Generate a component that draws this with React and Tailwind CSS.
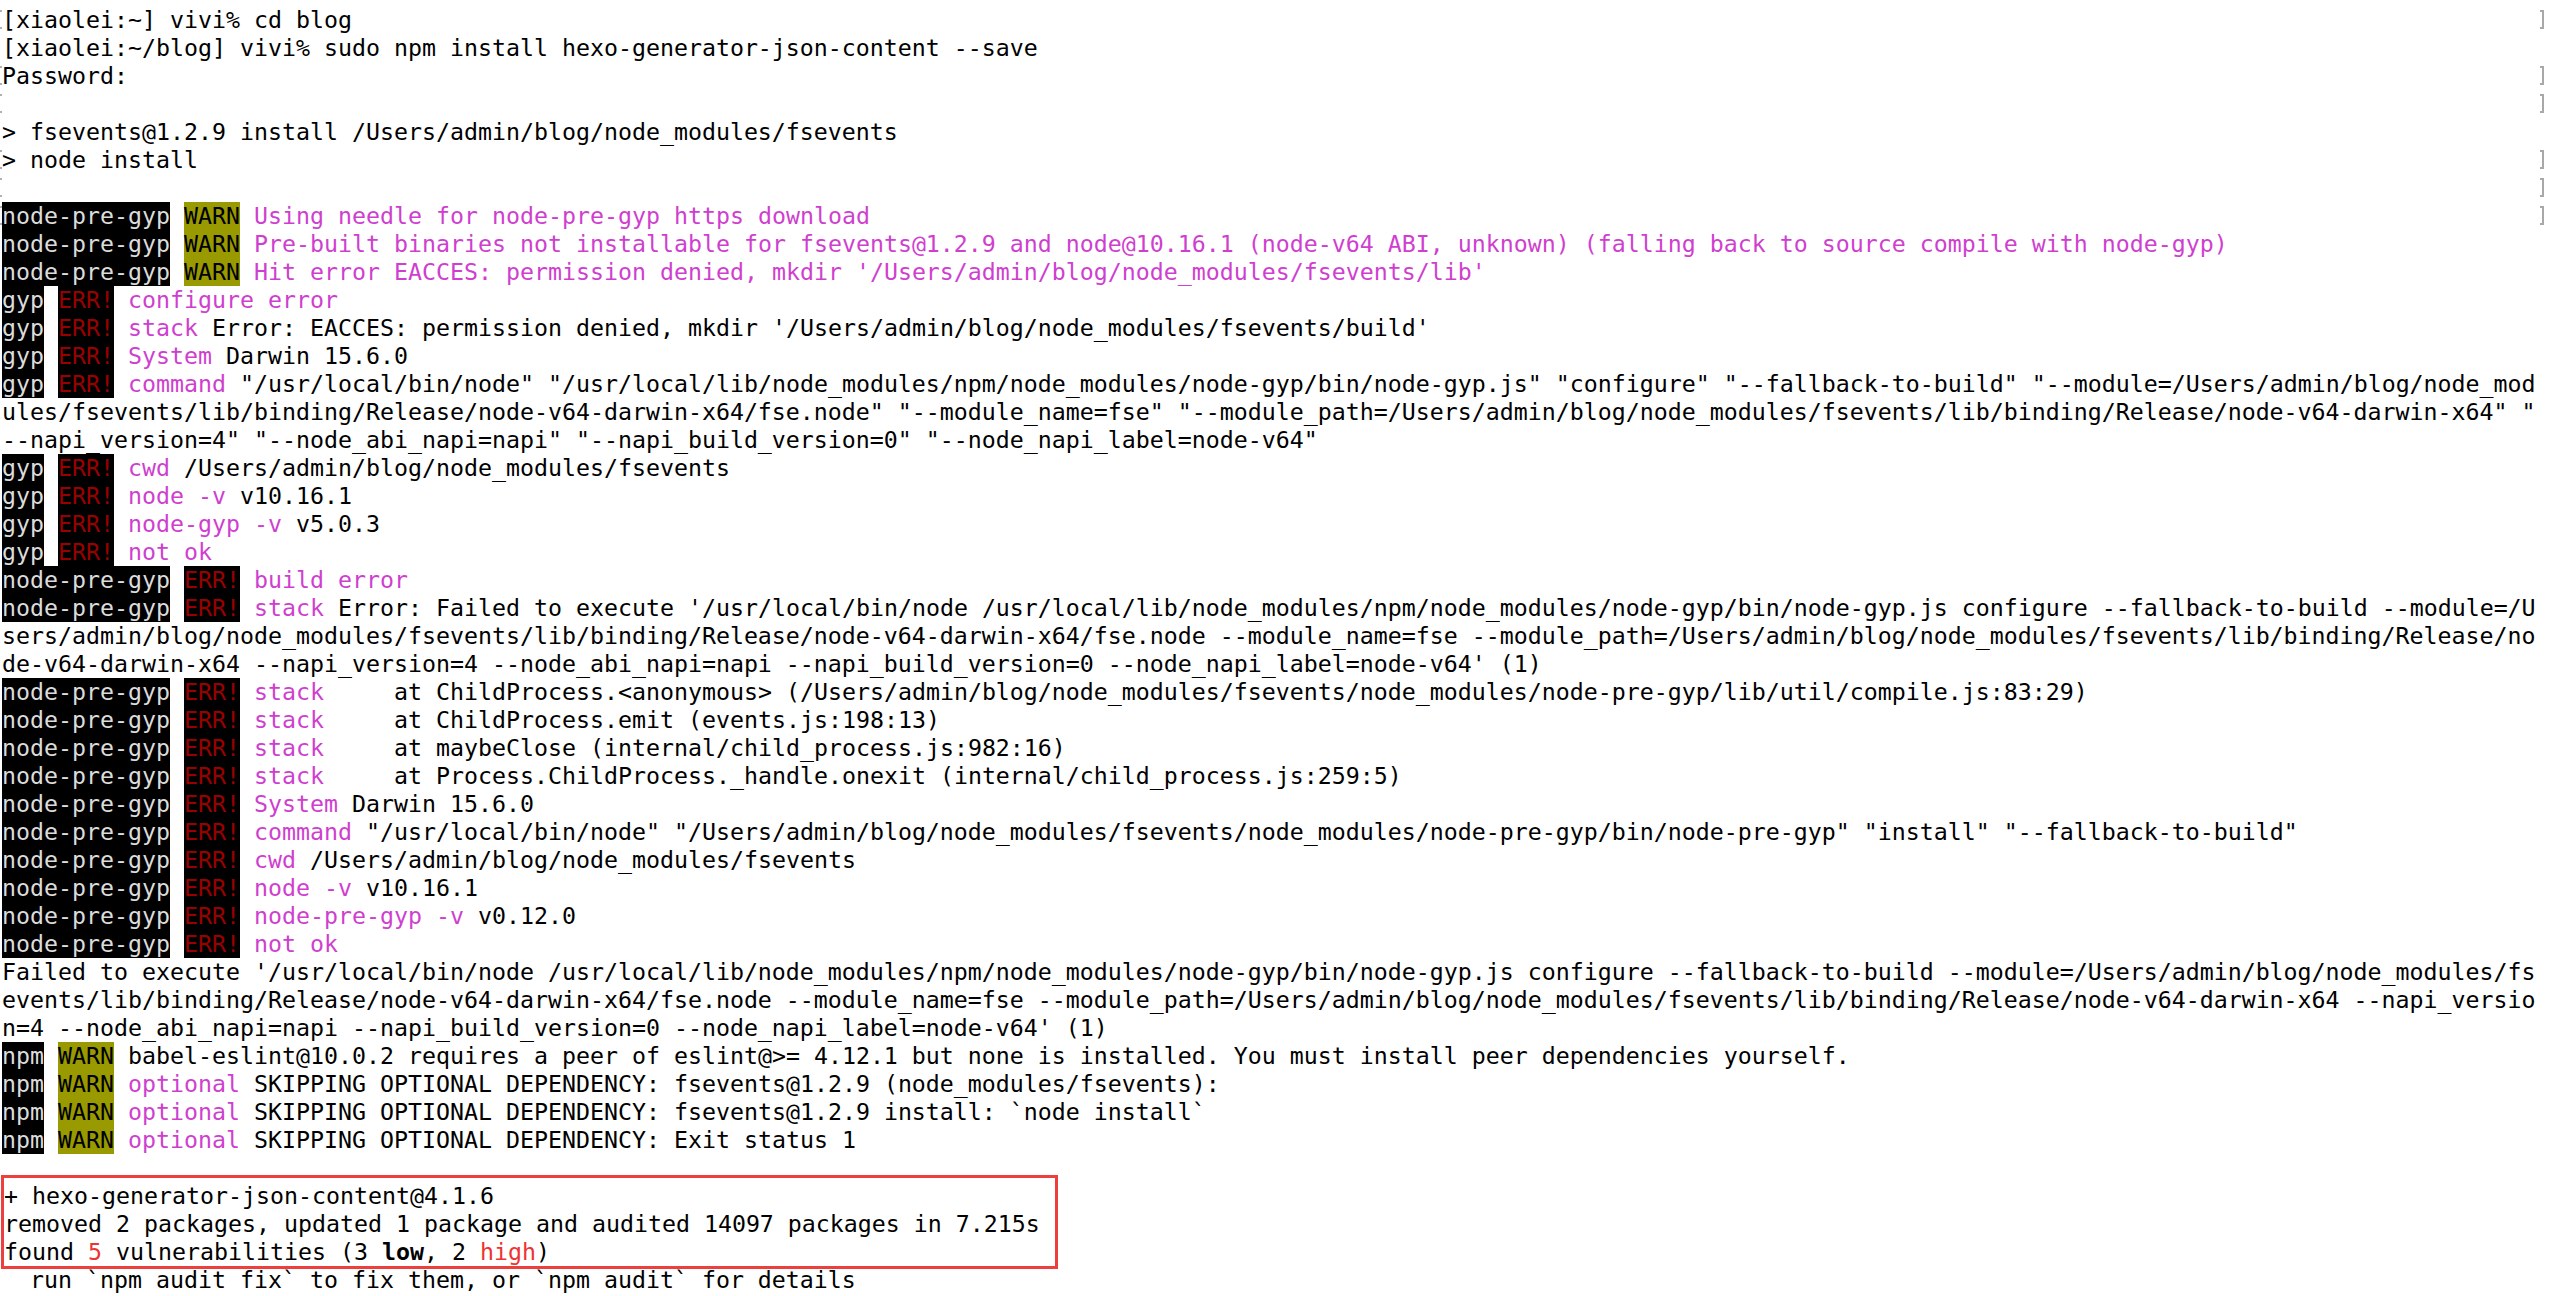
import React from 'react';

const tone = {
    inv: 'bg-black text-[#dcdcdc]',
    warn: 'bg-[#999900] text-black',
    err: 'bg-black text-[#990000]',
    mag: 'text-[#cf3fcf]',
    red: 'text-[#ee3333]',
    bold: 'font-bold',
};

// prefixes used by npm / node-gyp output
const npgW = [['node-pre-gyp', 'inv'], [' '], ['WARN', 'warn'], [' ']];
const npgE = [['node-pre-gyp', 'inv'], [' '], ['ERR!', 'err'], [' ']];
const gyp = [['gyp', 'inv'], [' '], ['ERR!', 'err'], [' ']];
const npm = [['npm', 'inv'], [' '], ['WARN', 'warn'], [' ']];

const lines = [
    {segs: [['[xiaolei:~] vivi% cd blog']], mark: true},
    {segs: [['[xiaolei:~/blog] vivi% sudo npm install hexo-generator-json-content --save']]},
    {segs: [['Password:']], mark: true},
    {segs: [['']], mark: true},
    {segs: [['> fsevents@1.2.9 install /Users/admin/blog/node_modules/fsevents']]},
    {segs: [['> node install']], mark: true},
    {segs: [['']], mark: true},
    {segs: [...npgW, ['Using needle for node-pre-gyp https download', 'mag']], mark: true},
    {segs: [...npgW, ['Pre-built binaries not installable for fsevents@1.2.9 and node@10.16.1 (node-v64 ABI, unknown) (falling back to source compile with node-gyp)', 'mag']]},
    {segs: [...npgW, ["Hit error EACCES: permission denied, mkdir '/Users/admin/blog/node_modules/fsevents/lib'", 'mag']]},
    {segs: [...gyp, ['configure error', 'mag']]},
    {segs: [...gyp, ['stack', 'mag'], [" Error: EACCES: permission denied, mkdir '/Users/admin/blog/node_modules/fsevents/build'"]]},
    {segs: [...gyp, ['System', 'mag'], [' Darwin 15.6.0']]},
    {segs: [...gyp, ['command', 'mag'], [' "/usr/local/bin/node" "/usr/local/lib/node_modules/npm/node_modules/node-gyp/bin/node-gyp.js" "configure" "--fallback-to-build" "--module=/Users/admin/blog/node_mod']]},
    {segs: [['ules/fsevents/lib/binding/Release/node-v64-darwin-x64/fse.node" "--module_name=fse" "--module_path=/Users/admin/blog/node_modules/fsevents/lib/binding/Release/node-v64-darwin-x64" "']]},
    {segs: [['--napi_version=4" "--node_abi_napi=napi" "--napi_build_version=0" "--node_napi_label=node-v64"']]},
    {segs: [...gyp, ['cwd', 'mag'], [' /Users/admin/blog/node_modules/fsevents']]},
    {segs: [...gyp, ['node -v', 'mag'], [' v10.16.1']]},
    {segs: [...gyp, ['node-gyp -v', 'mag'], [' v5.0.3']]},
    {segs: [...gyp, ['not ok', 'mag']]},
    {segs: [...npgE, ['build error', 'mag']]},
    {segs: [...npgE, ['stack', 'mag'], [" Error: Failed to execute '/usr/local/bin/node /usr/local/lib/node_modules/npm/node_modules/node-gyp/bin/node-gyp.js configure --fallback-to-build --module=/U"]]},
    {segs: [['sers/admin/blog/node_modules/fsevents/lib/binding/Release/node-v64-darwin-x64/fse.node --module_name=fse --module_path=/Users/admin/blog/node_modules/fsevents/lib/binding/Release/no']]},
    {segs: [["de-v64-darwin-x64 --napi_version=4 --node_abi_napi=napi --napi_build_version=0 --node_napi_label=node-v64' (1)"]]},
    {segs: [...npgE, ['stack', 'mag'], ['     at ChildProcess.<anonymous> (/Users/admin/blog/node_modules/fsevents/node_modules/node-pre-gyp/lib/util/compile.js:83:29)']]},
    {segs: [...npgE, ['stack', 'mag'], ['     at ChildProcess.emit (events.js:198:13)']]},
    {segs: [...npgE, ['stack', 'mag'], ['     at maybeClose (internal/child_process.js:982:16)']]},
    {segs: [...npgE, ['stack', 'mag'], ['     at Process.ChildProcess._handle.onexit (internal/child_process.js:259:5)']]},
    {segs: [...npgE, ['System', 'mag'], [' Darwin 15.6.0']]},
    {segs: [...npgE, ['command', 'mag'], [' "/usr/local/bin/node" "/Users/admin/blog/node_modules/fsevents/node_modules/node-pre-gyp/bin/node-pre-gyp" "install" "--fallback-to-build"']]},
    {segs: [...npgE, ['cwd', 'mag'], [' /Users/admin/blog/node_modules/fsevents']]},
    {segs: [...npgE, ['node -v', 'mag'], [' v10.16.1']]},
    {segs: [...npgE, ['node-pre-gyp -v', 'mag'], [' v0.12.0']]},
    {segs: [...npgE, ['not ok', 'mag']]},
    {segs: [["Failed to execute '/usr/local/bin/node /usr/local/lib/node_modules/npm/node_modules/node-gyp/bin/node-gyp.js configure --fallback-to-build --module=/Users/admin/blog/node_modules/fs"]]},
    {segs: [['events/lib/binding/Release/node-v64-darwin-x64/fse.node --module_name=fse --module_path=/Users/admin/blog/node_modules/fsevents/lib/binding/Release/node-v64-darwin-x64 --napi_versio']]},
    {segs: [["n=4 --node_abi_napi=napi --napi_build_version=0 --node_napi_label=node-v64' (1)"]]},
    {segs: [...npm, ['babel-eslint@10.0.2 requires a peer of eslint@>= 4.12.1 but none is installed. You must install peer dependencies yourself.']]},
    {segs: [...npm, ['optional', 'mag'], [' SKIPPING OPTIONAL DEPENDENCY: fsevents@1.2.9 (node_modules/fsevents):']]},
    {segs: [...npm, ['optional', 'mag'], [' SKIPPING OPTIONAL DEPENDENCY: fsevents@1.2.9 install: `node install`']]},
    {segs: [...npm, ['optional', 'mag'], [' SKIPPING OPTIONAL DEPENDENCY: Exit status 1']]},
    {segs: [['']]},
];

const boxed = [
    [['+ hexo-generator-json-content@4.1.6']],
    [['removed 2 packages, updated 1 package and audited 14097 packages in 7.215s']],
    [['found '], ['5', 'red'], [' vulnerabilities (3 '], ['low', 'bold'], [', 2 '], ['high', 'red'], [')']],
];

const tail = [['  run `npm audit fix` to fix them, or `npm audit` for details']];

function Text({segs}) {
    return (
        <div className="flex whitespace-pre">
            {segs.map(([t, k], i) => (
                <span key={i} className={`h-[28px] leading-[28px] ${k ? tone[k] : ''}`}>{t}</span>
            ))}
        </div>
    );
}

function Line({segs, mark}) {
    return (
        <div className="flex h-[28px]">
            <div className="w-[2px] shrink-0">
                {mark && (
                    <div className="mt-[4px] h-[19px] flex flex-col justify-between">
                        <div className="h-[2px] bg-[#b0b0b0]"/>
                        <div className="h-[2px] bg-[#b0b0b0]"/>
                    </div>
                )}
            </div>
            <Text segs={segs}/>
            <div className="flex-1"/>
            {mark && <div className="mt-[4px] mr-[10px] h-[19px] w-[4px] border-y-2 border-r-2 border-[#a8a8a8]"/>}
        </div>
    );
}

export default function App() {
    return (
        <div className="min-h-screen bg-white pt-[6px] text-black text-[23.25px] leading-[28px] font-['DejaVu_Sans_Mono',monospace] overflow-hidden">
            {lines.map((l, i) => <Line key={i} {...l}/>)}
            <div className="-mt-[7px] -mb-[3px] ml-[1px] w-[1057px] border-[3px] border-[#ee3f3f] pt-[4px]">
                {boxed.map((segs, i) => (
                    <div key={i} className="h-[28px]">
                        <Text segs={segs}/>
                    </div>
                ))}
            </div>
            <Line segs={tail}/>
        </div>
    );
}
